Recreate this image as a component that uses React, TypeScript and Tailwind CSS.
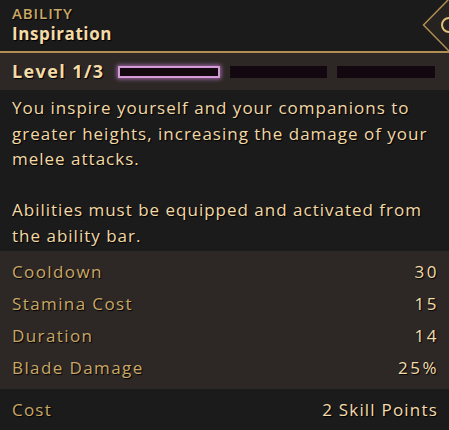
import React from 'react';

const stats = [
  { label: 'Cooldown', value: '30' },
  { label: 'Stamina Cost', value: '15' },
  { label: 'Duration', value: '14' },
  { label: 'Blade Damage', value: '25%' },
];

const App: React.FC = () => {
  return (
    <div
      className="w-[449px] h-[430px] overflow-hidden bg-[#1c1b1b] text-[#f2d9a6] [text-shadow:1px_1px_1px_#000]"
      style={{ fontFamily: '"Open Sans", Lato, sans-serif' }}
    >
      {/* Header */}
      <div className="relative h-[51px] bg-[#1c1b1b] px-3 pt-[4px]">
        <div className="text-[15px] leading-[19px] font-semibold text-[#c9a867] tracking-[0.9px]">ABILITY</div>
        <div className="text-[17px] leading-[22px] font-bold text-[#f4dba8] tracking-[0.6px]">Inspiration</div>
        <svg className="absolute right-0 top-0" width="27" height="52" viewBox="0 0 27 52">
          <path d="M27 -1 L1.5 25 L27 51" fill="#25221f" stroke="#b08d52" strokeWidth="1.5" />
          <path d="M27 18 A7 7 0 0 0 27 32" fill="none" stroke="#e0bf7c" strokeWidth="2" />
        </svg>
      </div>
      <div className="h-[2px] bg-[#b18e52]" />

      {/* Level row */}
      <div className="h-[37px] bg-[#2d2825] flex items-center px-3 gap-[13px]">
        <span className="text-[18px] font-bold text-[#f4dba8] w-[93px] whitespace-nowrap tracking-[1.4px]">Level 1/3</span>
        <div className="flex-1 flex gap-[10px] pr-[2px]">
          <div className="flex-1 h-[12px] bg-[#130710] border-2 border-[#d49ad8] shadow-[0_0_4px_1px_#a06aa8]" />
          <div className="flex-1 h-[12px] bg-[#130710]" />
          <div className="flex-1 h-[12px] bg-[#130710]" />
        </div>
      </div>

      {/* Description */}
      <div className="h-[161px] pl-3 pt-[5px] text-[17px] leading-[25.5px] tracking-[1px] whitespace-nowrap">
        <p>
          You inspire yourself and your companions to
          <br />
          greater heights, increasing the damage of your
          <br />
          melee attacks.
        </p>
        <p className="mt-[25.5px]">
          Abilities must be equipped and activated from
          <br />
          the ability bar.
        </p>
      </div>

      {/* Stats */}
      <div className="bg-[#2d2825] px-3 py-[5px] text-[17px] tracking-[1.4px]">
        {stats.map((s) => (
          <div key={s.label} className="flex justify-between h-[32px] items-center">
            <span className="text-[#c9a867]">{s.label}</span>
            <span className="text-[#f2dcaa] tracking-[2.5px] mr-[-2px]">{s.value}</span>
          </div>
        ))}
      </div>

      {/* Cost */}
      <div className="flex justify-between items-center h-[41px] px-3 text-[17px] tracking-[1.2px]">
        <span className="text-[#c9a867]">Cost</span>
        <span className="text-[#f2dcaa] mr-[-1px]">2 Skill Points</span>
      </div>
    </div>
  );
};

export default App;
